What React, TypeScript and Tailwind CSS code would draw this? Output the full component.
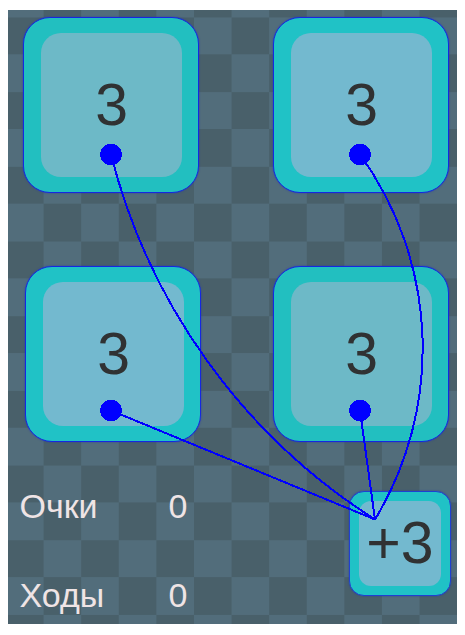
import type { ReactNode } from 'react';

const font = "font-['Liberation_Sans',Arial,sans-serif]";

function Tile({ tone, className = '' }: { tone: 'teal' | 'sky'; className?: string }) {
  const outer = tone === 'teal' ? 'bg-[#22bfc0]' : 'bg-[#20c2c6]';
  const inner = tone === 'teal' ? 'bg-[#6db9c7]' : 'bg-[#73b9cf]';
  return (
    <div
      className={`h-[176px] w-[176px] rounded-[27px] border border-[#1428e0] pt-[15px] pr-[16px] pb-[15px] pl-[16.5px] shadow-[0_0_2px_rgba(35,50,190,0.75)] ${outer} ${className}`}
    >
      <div className={`flex h-full items-center justify-center rounded-[20px] ${inner}`}>
        <span className="translate-x-[0.5px] text-[59px] leading-none text-[#303233]">3</span>
      </div>
    </div>
  );
}

function Stat({ label, children }: { label: string; children: ReactNode }) {
  return (
    <div className="flex h-[36px] items-center text-[34px] leading-none text-[#efe4e5]">
      <span className="w-[149px]">{label}</span>
      <span>{children}</span>
    </div>
  );
}

export default function App() {
  return (
    <div className={`relative h-[635px] w-[465px] overflow-hidden bg-white pt-[10px] pl-[8px] ${font}`}>
      <main className="flex h-[614px] w-[449px] flex-col bg-[conic-gradient(#49606a_25%,#526d7b_25%_50%,#49606a_50%_75%,#526d7b_75%)] bg-[length:75.2px_74.7px] bg-[position:-2px_-30.4px] pt-[7px]">
        <section className="grid grid-cols-[250px_176px] gap-y-[73px] pl-[15px]">
          <Tile tone="teal" />
          <Tile tone="sky" />
          <Tile tone="sky" className="ml-[2px]" />
          <Tile tone="teal" />
        </section>
        <section className="mt-[49px] flex">
          <div className="-mt-[3px] flex w-[341px] flex-col gap-[53px] pl-[11.5px]">
            <Stat label="Очки">0</Stat>
            <Stat label="Ходы">0</Stat>
          </div>
          <div className="h-[105px] w-[102px] rounded-[15px] border border-[#2040d0] bg-[#20c2c6] px-[9px] py-[9px] shadow-[0_0_2px_rgba(35,50,180,0.75)]">
            <div className="flex h-full items-center justify-center rounded-[12px] bg-[#73b9cf] text-[59px] leading-none text-[#303233]">
              +3
            </div>
          </div>
        </section>
      </main>
      <svg
        className="pointer-events-none absolute inset-0"
        width="465"
        height="635"
        viewBox="0 0 465 635"
        fill="none"
        stroke="#0000ff"
        strokeWidth="2"
        shapeRendering="crispEdges"
      >
        <path d="M111 154.5A611 611 0 0 0 375 519.5" />
        <path d="M360 154.5A331 331 0 0 1 375 519.5" />
        <path d="M111 410.5L375 519.5" />
        <path d="M360 410.5L375 519.5" />
        <g fill="#0000ff" stroke="none">
          <circle cx="111" cy="154.5" r="10.8" />
          <circle cx="360" cy="154.5" r="10.8" />
          <circle cx="111" cy="410.5" r="10.8" />
          <circle cx="360" cy="410.5" r="10.8" />
        </g>
      </svg>
    </div>
  );
}
